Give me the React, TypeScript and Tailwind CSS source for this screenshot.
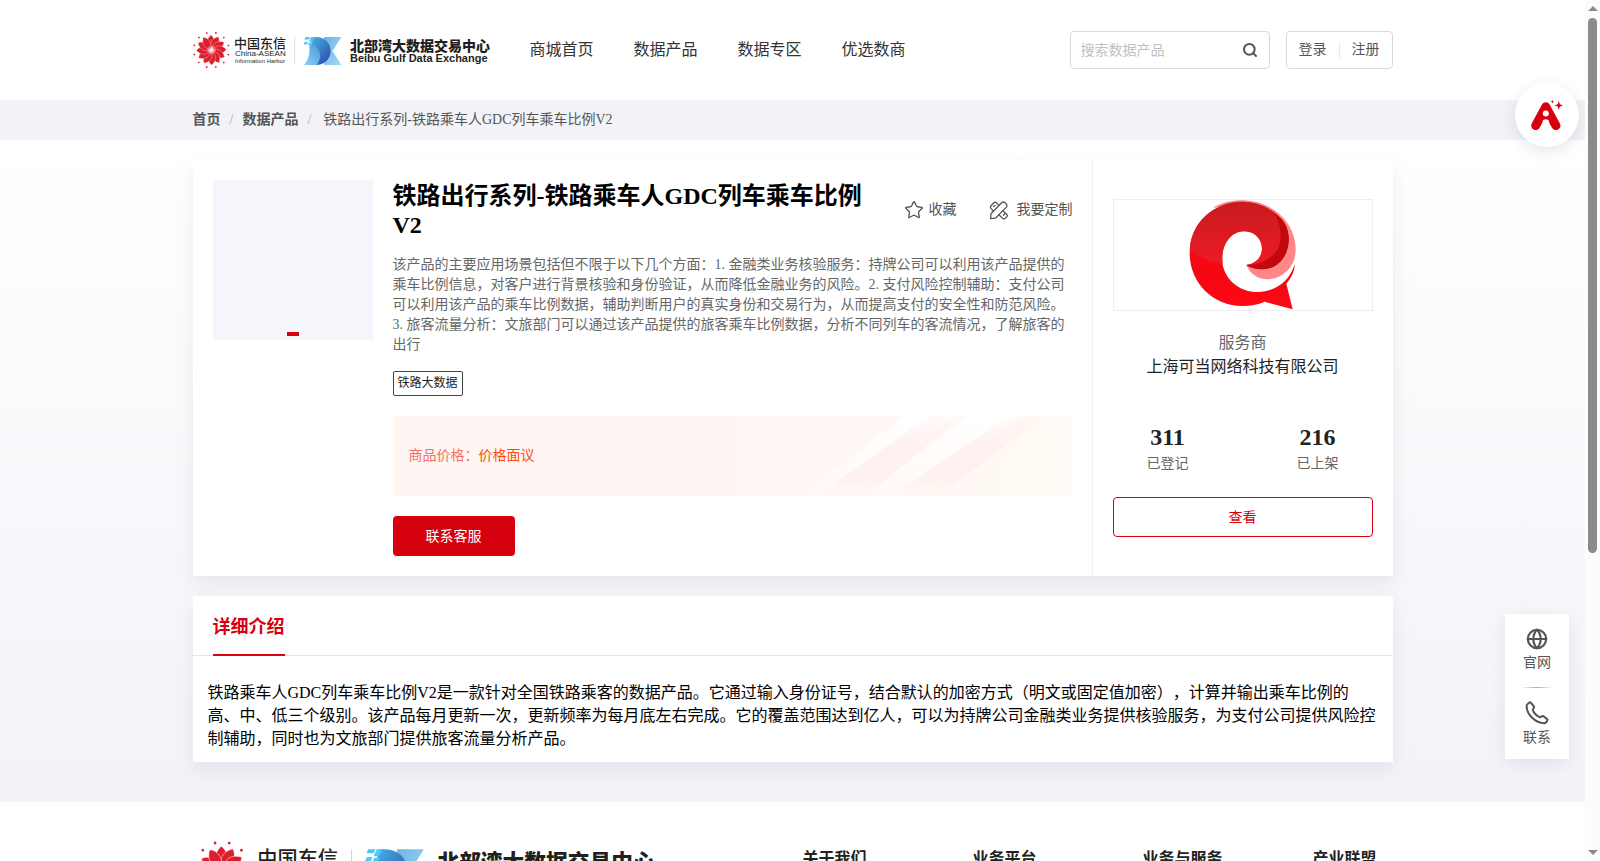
import { useState } from "react";
import { Globe, Search, Star } from "lucide-react";

const NAV = ["商城首页", "数据产品", "数据专区", "优选数商"];
const FOOTER_COLUMNS = ["关于我们", "业务平台", "业务与服务", "产业联盟"];
const PETALS = Array.from({ length: 12 }, (_, i) => i * 30);

function SiteLogo({ id, className }: { id: string; className: string }) {
  return (
    <svg viewBox="0 0 298 38" className={className} role="img" aria-label="北部湾大数据交易中心">
      <defs>
        <linearGradient id={`${id}-d`} x1="0" y1="0" x2="1" y2="1">
          <stop offset="0" stopColor="#45b4e6" />
          <stop offset=".55" stopColor="#3a79c6" />
          <stop offset="1" stopColor="#2b3f9e" />
        </linearGradient>
        <linearGradient id={`${id}-x`} x1="0" y1="0" x2="1" y2="1">
          <stop offset="0" stopColor="#6db4e6" />
          <stop offset="1" stopColor="#a5d8f5" />
        </linearGradient>
        <linearGradient id={`${id}-f`} x1="0" y1="1" x2="1" y2="0">
          <stop offset="0" stopColor="#8fd0f4" />
          <stop offset="1" stopColor="#4a9bd8" />
        </linearGradient>
        <radialGradient id={`${id}-c`}>
          <stop offset="0" stopColor="#ffffff" />
          <stop offset="1" stopColor="#ffffff" stopOpacity="0" />
        </radialGradient>
      </defs>
      <g transform="translate(18.3 19)">
        {PETALS.map((deg) => (
          <g key={deg} transform={`rotate(${deg})`}>
            <path d="M0 0C-5.4 -5 -5.6 -10 -.6 -15C3.4 -12.4 4.8 -7 0 0Z" fill="#dc1f2d" stroke="#fff" strokeWidth=".3" />
            <circle cx="4.6" cy="-17" r=".9" fill="#dc1f2d" />
          </g>
        ))}
        <circle r="5" fill={`url(#${id}-c)`} />
      </g>
      <g className="font-['Liberation_Sans','Noto_Sans_CJK_SC',sans-serif]" fill="#231f20">
        <text x="41" y="16.5" fontSize="13" fontWeight="500">中国东信</text>
        <text x="42" y="25" fontSize="8">China-ASEAN</text>
        <text x="42" y="32" fontSize="6">Information Harbor</text>
        <text x="157" y="19.5" fontSize="14" fontWeight="900">北部湾大数据交易中心</text>
        <text x="157" y="31" fontSize="11" fontWeight="700">Beibu Gulf Data Exchange</text>
      </g>
      <path d="M101.7 6V33" stroke="#ccc" strokeWidth=".6" />
      <path d="M131 6H148.3L139.5 20L148.3 34H131Z" fill={`url(#${id}-x)`} />
      <path d="M119.5 6H123C133 6 137.6 13 137.6 20C137.6 28 131 34 123 34H117C126 27 126 16 117.5 14Z" fill={`url(#${id}-d)`} />
      <path d="M111 34C115 29 117 24 116.4 15.5L118 13.4C128 15 130 28 123 34Z" fill={`url(#${id}-f)`} />
      <path d="M112.5 6H117L116 8.6H111.2ZM118 6H121.4L119.2 10.5H115.8ZM111.5 11H115.2L114 13.6H110.5ZM116.4 11.5H120L118 14.6H114.8Z" fill="#4cc9f5" />
    </svg>
  );
}

function ProviderLogo() {
  return (
    <svg viewBox="328 152 324 330" className="h-[110px] w-[108px]" role="img" aria-label="服务商标志">
      <defs>
        <linearGradient id="q-body" x1="0" y1="0" x2="0" y2="1">
          <stop offset="0" stopColor="#f3202a" />
          <stop offset=".6" stopColor="#f40712" />
          <stop offset="1" stopColor="#ff0815" />
        </linearGradient>
        <linearGradient id="q-top" x1="0" y1="0" x2="0" y2="1">
          <stop offset="0" stopColor="#c91b20" />
          <stop offset="1" stopColor="#f01a24" />
        </linearGradient>
      </defs>
      <path
        d="M500 347C514 356 530 360 547 360C593 360 627 322 627 270C627 238 600 190 540 165L400 175C430 158 462 152 490 153C580 155 648 220 648 300C648 352 610 390 560 390C530 388 510 370 500 347Z"
        fill="#ff8787"
      />
      <path
        d="M500 347C530 343 547 322 547 298C547 268 524 246 493 246C455 246 427 282 427 325C427 385 475 428 535 428C590 426 630 395 645 345C645 368 633 388 620 403L639 480L555 457C535 466 512 470 488 470C400 470 330 400 330 312C330 225 400 157 488 157C530 157 565 172 590 195C615 214 627 238 627 270C627 322 593 360 547 360C530 360 514 356 500 347Z"
        fill="url(#q-body)"
      />
      <path
        d="M331 298C358 325 395 340 429 343C423 285 455 246 493 246C524 246 547 268 547 298C547 322 530 343 500 347C514 356 530 360 547 360C593 360 627 322 627 270C627 238 615 214 590 195C565 172 530 157 488 157C402 157 334 220 331 298Z"
        fill="url(#q-top)"
      />
      <path d="M583 190C615 212 627 238 627 270C627 322 593 360 547 360C530 360 514 356 500 347C565 345 603 308 603 262C603 235 596 210 583 190Z" fill="#c0090f" />
    </svg>
  );
}

function AssistantIcon() {
  return (
    <svg viewBox="0 0 32 32" className="size-8" aria-hidden="true">
      <path d="M4.7 26.6L14.8 7.8L24.9 26.6" fill="none" stroke="#d7000f" strokeWidth="9" strokeLinecap="round" strokeLinejoin="round" />
      <path d="M14.8 8L20 22H9.6Z" fill="#d7000f" />
      <circle cx="14.8" cy="14.6" r="3" fill="#fff" />
      <path d="M11.6 32V22.6C11.6 19.4 18 19.4 18 22.6V32Z" fill="#fff" />
      <path d="M27.8 2L28.9 5.3L32 6.4L28.9 7.5L27.8 10.8L26.7 7.5L23.6 6.4L26.7 5.3ZM21.4 1L21.9 2.3L23.2 2.8L21.9 3.3L21.4 4.6L20.9 3.3L19.6 2.8L20.9 2.3Z" fill="#d7000f" />
    </svg>
  );
}

function CustomizeIcon() {
  return (
    <svg viewBox="0 0 20 20" className="size-5" fill="none" stroke="currentColor" strokeWidth="1.3" strokeLinejoin="round" strokeLinecap="round" aria-hidden="true">
      <path d="M1.6 18.6L2 13.8L12.6 2.8C13.6 1.8 15 1.8 16 2.8L17.2 4C18.2 5 18.2 6.4 17.2 7.4L6.4 18.2Z" />
      <path d="M4.4 11.2L2 8.4C1.2 7.4 1.2 6.6 2 5.8L4.8 2.8C5.6 2 6.6 2 7.4 2.8L9.8 5.4" />
      <path d="M13.8 10.8L17.8 14.4C18.6 15.2 18.6 16 17.8 16.8L16 18.4C15.2 19.2 14.4 19.2 13.6 18.4L9.8 14.8" />
      <path d="M4.6 6.6L6 5.4M14.4 15.2L15.8 13.8" />
    </svg>
  );
}

function PhoneIcon() {
  return (
    <svg viewBox="0 0 24 24" className="size-6" fill="none" stroke="currentColor" strokeWidth="2" strokeLinejoin="round" aria-hidden="true">
      <path d="M5.6 1.4L9 5.6C9.5 6.4 8 7.8 7.8 8.8C8.4 11.8 12 15.4 15 16.2C16 16 17.2 14.6 18.2 15L22.4 18.4C22.8 19.2 21.4 21.6 19.6 22.2C10.6 22.6 1.4 13.2 1.6 4.6C2 3 4.6 1 5.6 1.4Z" />
    </svg>
  );
}

// 商品价格右侧的斜纹装饰
function PriceStripes() {
  return (
    <svg viewBox="0 0 290 80" className="absolute top-0 right-0 h-full" aria-hidden="true">
      <defs>
        <linearGradient id="stripe-w" x1="0" y1="0" x2="0" y2="1">
          <stop offset="0" stopColor="#fff" />
          <stop offset="1" stopColor="#fff" stopOpacity=".2" />
        </linearGradient>
        <linearGradient id="stripe-p" x1="0" y1="0" x2="0" y2="1">
          <stop offset="0" stopColor="#fff1ef" stopOpacity=".2" />
          <stop offset=".4" stopColor="#fff1ef" />
          <stop offset=".8" stopColor="#fff1ef" />
          <stop offset="1" stopColor="#fff6f1" stopOpacity=".2" />
        </linearGradient>
      </defs>
      <path d="M122 0H176L70 80H16Z" fill="url(#stripe-w)" />
      <path d="M146 0H178L84 80H34Z" fill="url(#stripe-p)" />
      <path d="M186 0H240L134 80H80Z" fill="url(#stripe-w)" />
      <path d="M225 0H262L156 80H110Z" fill="url(#stripe-p)" />
    </svg>
  );
}

function Header() {
  const [keyword, setKeyword] = useState("");

  return (
    <header className="bg-white">
      <div className="mx-auto flex h-[100px] max-w-[1200px] items-center">
        <a href="#" className="shrink-0">
          <SiteLogo id="head" className="h-[38px] w-[298px]" />
        </a>
        <nav className="ml-[39px] flex gap-10 text-base text-[#333]">
          {NAV.map((item) => (
            <a key={item} href="#">
              {item}
            </a>
          ))}
        </nav>
        <form
          className="ml-auto flex h-[38px] w-[200px] items-center rounded border border-[#d9d9d9] px-[10px]"
          onSubmit={(e) => e.preventDefault()}
        >
          <input
            value={keyword}
            onChange={(e) => setKeyword(e.target.value)}
            aria-label="搜索数据产品"
            placeholder="搜索数据产品"
            className="w-full min-w-0 bg-transparent pt-[2px] text-sm outline-none placeholder:text-[#bfbfbf]"
          />
          <button type="submit" aria-label="搜索" className="shrink-0 px-px text-[#555]">
            <Search className="size-4" strokeWidth={3} />
          </button>
        </form>
        <div className="ml-4 flex h-[38px] items-center rounded border border-[#d9d9d9] px-3 text-sm text-[#555]">
          <a href="#">登录</a>
          <span className="mx-3 h-4 w-px bg-[#e8e8e8]" />
          <a href="#">注册</a>
        </div>
      </div>
    </header>
  );
}

function Breadcrumb() {
  return (
    <nav aria-label="breadcrumb" className="bg-[#f2f3f8]">
      <div className="mx-auto flex h-10 max-w-[1200px] items-center text-sm text-[#555]">
        <a href="#" className="font-bold">首页</a>
        <span className="mx-[9px] text-[#aaa]">/</span>
        <a href="#" className="font-bold">数据产品</a>
        <span className="mr-3 ml-[9px] text-[#aaa]">/</span>
        <span>铁路出行系列-铁路乘车人GDC列车乘车比例V2</span>
      </div>
    </nav>
  );
}

function ProductCard() {
  return (
    <section className="flex bg-white shadow-[0_8px_20px_rgba(0,0,0,0.07)]">
      <div className="flex min-w-0 flex-1 gap-5 py-5 pr-[19px] pl-5">
        <div className="flex size-40 shrink-0 items-end justify-center bg-[#f4f6fb] pb-1">
          <span className="h-1 w-3 bg-[#d7000f]" />
        </div>
        <div className="min-w-0 flex-1">
          <div className="flex items-center justify-between">
            <h1 className="w-[480px] pt-[2px] text-2xl leading-[29px] font-bold text-black">铁路出行系列-铁路乘车人GDC列车乘车比例V2</h1>
            <div className="flex gap-8 text-sm text-[#555]">
              <button type="button" className="flex items-center gap-[5px]">
                <Star className="size-5" strokeWidth={1.6} />
                收藏
              </button>
              <button type="button" className="flex items-center gap-2">
                <CustomizeIcon />
                我要定制
              </button>
            </div>
          </div>
          <p className="mt-[15px] text-sm leading-5 text-[#666]">
            该产品的主要应用场景包括但不限于以下几个方面：1. 金融类业务核验服务：持牌公司可以利用该产品提供的乘车比例信息，对客户进行背景核验和身份验证，从而降低金融业务的风险。2.
            支付风险控制辅助：支付公司可以利用该产品的乘车比例数据，辅助判断用户的真实身份和交易行为，从而提高支付的安全性和防范风险。3.
            旅客流量分析：文旅部门可以通过该产品提供的旅客乘车比例数据，分析不同列车的客流情况，了解旅客的出行
          </p>
          <div className="mt-4 flex">
            <span className="rounded-xs border border-[#444] px-1 text-xs leading-[23px] text-[#222]">铁路大数据</span>
          </div>
          <div className="relative mt-5 flex h-20 items-center overflow-hidden bg-linear-to-r from-[#fff5f2] via-[#fff6f4] to-[#fffaf5] px-4 text-sm">
            <PriceStripes />
            <span className="text-[#f7705f]">商品价格：</span>
            <span className="text-[#ff4a0d]">价格面议</span>
          </div>
          <button type="button" className="mt-5 h-10 rounded bg-[#d7000f] px-[33px] pt-[2px] text-sm text-white">
            联系客服
          </button>
        </div>
      </div>
      <aside className="w-[301px] shrink-0 border-l border-[#eee] px-5 pt-[39px] text-center">
        <div className="flex justify-center border border-[#eee]">
          <ProviderLogo />
        </div>
        <p className="mt-5 text-base leading-6 text-[#666]">服务商</p>
        <p className="text-base leading-6 text-[#222]">上海可当网络科技有限公司</p>
        <dl className="-mx-5 mt-11 grid grid-cols-2">
          <div className="flex flex-col-reverse">
            <dt className="text-sm leading-[26px] text-[#666]">已登记</dt>
            <dd className="text-2xl leading-7 font-bold text-[#222]">311</dd>
          </div>
          <div className="flex flex-col-reverse">
            <dt className="text-sm leading-[26px] text-[#666]">已上架</dt>
            <dd className="text-2xl leading-7 font-bold text-[#222]">216</dd>
          </div>
        </dl>
        <button type="button" className="mt-5 h-10 w-full rounded border border-[#d7000f] pt-[2px] text-sm text-[#d7000f]">
          查看
        </button>
      </aside>
    </section>
  );
}

function DetailCard() {
  return (
    <section className="mt-5 bg-white shadow-[0_8px_20px_rgba(0,0,0,0.07)]">
      <div className="flex border-b border-[#e4e6ed] px-5">
        <h2 className="-mb-px border-b-2 border-[#d7000f] pt-1 text-lg leading-[54px] font-bold text-[#d7000f]">详细介绍</h2>
      </div>
      <p className="px-[15px] pt-[25px] pb-3 text-base leading-[23px] text-black">
        铁路乘车人GDC列车乘车比例V2是一款针对全国铁路乘客的数据产品。它通过输入身份证号，结合默认的加密方式（明文或固定值加密），计算并输出乘车比例的高、中、低三个级别。该产品每月更新一次，更新频率为每月底左右完成。它的覆盖范围达到亿人，可以为持牌公司金融类业务提供核验服务，为支付公司提供风险控制辅助，同时也为文旅部门提供旅客流量分析产品。
      </p>
    </section>
  );
}

function Footer() {
  return (
    <footer className="bg-white">
      <div className="mx-auto flex max-w-[1200px] justify-between pt-[38px]">
        <SiteLogo id="foot" className="h-[59px] w-[464px]" />
        <div className="grid w-[590px] grid-cols-[170px_170px_170px_80px] pt-[7px] text-base font-bold text-[#222]">
          {FOOTER_COLUMNS.map((title) => (
            <h3 key={title}>{title}</h3>
          ))}
        </div>
      </div>
    </footer>
  );
}

function FloatingTools() {
  return (
    <>
      <button
        type="button"
        aria-label="智能助手"
        className="absolute top-[83px] right-[6px] flex size-16 items-center justify-center rounded-full bg-white shadow-[0_4px_16px_rgba(0,0,0,0.1)]"
      >
        <AssistantIcon />
      </button>
      <div className="absolute right-4 bottom-[102px] flex w-16 flex-col items-center bg-white pt-[14px] pb-[11px] text-sm leading-5 text-[#555] shadow-[0_4px_16px_rgba(0,0,0,0.08)]">
        <a href="#" className="flex flex-col items-center gap-[3px]">
          <Globe className="size-[22px]" strokeWidth={2.4} />
          官网
        </a>
        <span className="mt-[14px] mb-[13px] h-px w-8 bg-linear-to-r from-transparent via-[#aaa] to-transparent" />
        <a href="#" className="flex flex-col items-center gap-[3px]">
          <PhoneIcon />
          联系
        </a>
      </div>
    </>
  );
}

function ScrollTrack() {
  return (
    <div aria-hidden="true" className="flex w-[15px] shrink-0 flex-col items-center justify-between bg-[#fcfcfc] py-[6px]">
      <span className="border-x-[5px] border-b-[5px] border-x-transparent border-b-[#8b8b8b]" />
      <span className="mt-[7px] mb-auto h-[63%] w-[9px] rounded-full bg-[#8b8b8b]" />
      <span className="border-x-[5px] border-t-[5px] border-x-transparent border-t-[#8b8b8b]" />
    </div>
  );
}

export default function App() {
  return (
    <div className="flex h-screen overflow-hidden bg-white font-['Liberation_Serif','Noto_Sans_CJK_SC',serif] [text-spacing-trim:space-all]">
      <div className="relative min-w-0 flex-1 overflow-hidden">
        <Header />
        <Breadcrumb />
        <main className="bg-linear-to-b from-white to-[#f1f3f8] pt-5 pb-10">
          <div className="mx-auto max-w-[1200px]">
            <ProductCard />
            <DetailCard />
          </div>
        </main>
        <Footer />
        <FloatingTools />
      </div>
      <ScrollTrack />
    </div>
  );
}
